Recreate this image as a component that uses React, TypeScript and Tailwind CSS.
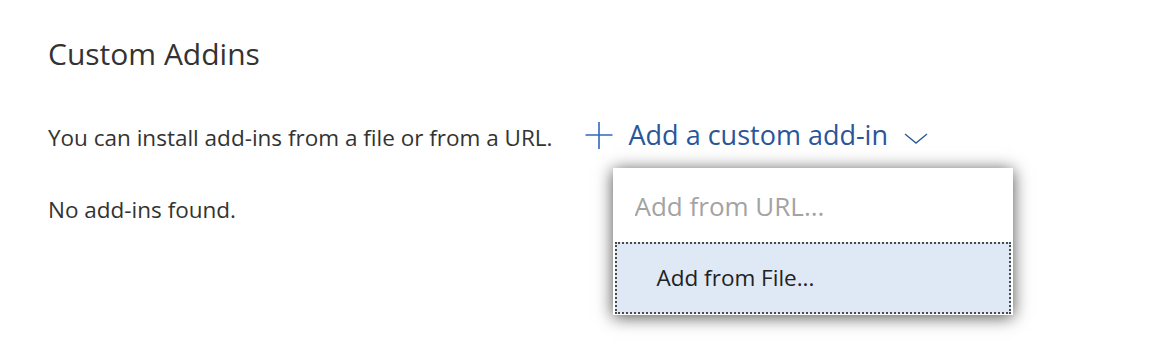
import { useState } from "react";

function PlusIcon() {
  return (
    <svg width="28" height="28" viewBox="0 0 28 28" fill="none">
      <path d="M14 1v27M0.5 14h27" stroke="#2f69b8" strokeWidth="1.6" />
    </svg>
  );
}

function ChevronIcon() {
  return (
    <svg width="24" height="11" viewBox="0 0 24 11" fill="none">
      <path d="M1 1l11 9 11-9" stroke="#2d5b9c" strokeWidth="1.4" />
    </svg>
  );
}

export default function App() {
  const [open] = useState(true);

  return (
    <div className="h-[348px] w-[1164px] bg-white pl-[48px] pt-[35px] font-['Open_Sans',sans-serif] text-[#333333]">
      <h2 className="text-[30px] leading-[38px]">Custom Addins</h2>

      <div className="mt-[44px] flex items-start">
        <p className="mt-[3px] text-[22.5px] leading-[36px]">
          You can install add-ins from a file or from a URL.
        </p>
        <div className="relative ml-[32px]">
          <button className="flex h-[36px] items-center gap-[16px] text-[27px] leading-[36px] text-[#2a5699]">
            <PlusIcon />
            <span>Add a custom add-in</span>
            <span className="mt-[7px]">
              <ChevronIcon />
            </span>
          </button>

          {open && (
            <div className="absolute left-[28px] top-[51px] z-10 w-[400px] bg-white pb-[1px] shadow-[0_2px_16px_rgba(0,0,0,0.7)]">
              <input
                placeholder="Add from URL..."
                className="block h-[74px] w-full bg-white pl-[22px] pt-[2px] text-[26px] text-[#333] outline-none placeholder:text-[#a3a3a3]"
              />
              <div className="mx-[2px] flex h-[72px] items-center border-2 border-dotted border-[#4a4a4a] bg-[#dfe8f5] pl-[40px] text-[22.5px] text-[#222222]">
                Add from File...
              </div>
            </div>
          )}
        </div>
      </div>

      <p className="mt-[39px] text-[22.5px] leading-[30px]">No add-ins found.</p>
    </div>
  );
}
